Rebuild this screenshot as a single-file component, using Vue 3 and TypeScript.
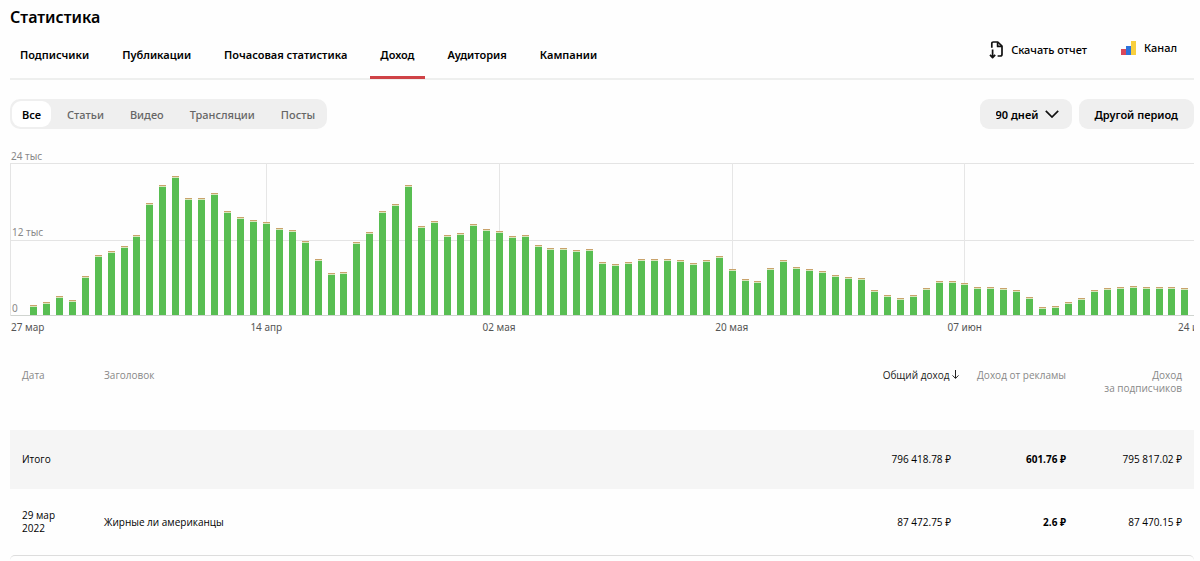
<script setup lang="ts">
import { ref } from 'vue'

interface Row {
  date: string[]
  title: string
  total: string
  ads: string
  subscribers: string
}

const tabs = ['Подписчики', 'Публикации', 'Почасовая статистика', 'Доход', 'Аудитория', 'Кампании']
const activeTab = ref('Доход')

const kinds = ['Все', 'Статьи', 'Видео', 'Трансляции', 'Посты']
const activeKind = ref('Все')

const period = ref('90')

// Daily income in thousands of roubles, 27 March to 24 June
const maxIncome = 24
const income: number[] = [
  1.6, 2.1, 3.05, 2.4, 6.2, 9.5, 10.1, 10.9, 12.7, 17.7, 20.5, 22, 18.5, 18.5, 19.3, 16.5, 15.5, 15.05,
  14.7, 13.7, 13.5, 11.7, 8.9, 6.7, 6.8, 11.5, 13.1, 16.5, 17.6, 20.5, 14.05, 14.9, 12.6, 13, 14.3, 13.6,
  13.3, 12.5, 12.6, 11.1, 10.6, 10.6, 10.3, 10.4, 8.4, 8.1, 8.4, 8.9, 8.9, 8.9, 8.7, 8.2, 8.7, 9.3,
  7.3, 5.7, 5.3, 7.5, 8.7, 7.6, 7.3, 7, 6.3, 6.05, 5.9, 4, 3.2, 2.7, 3.2, 4.3, 5.3, 5.3,
  5.05, 4.5, 4.5, 4.3, 4, 2.9, 1.3, 1.5, 2.1, 2.7, 4, 4.3, 4.5, 4.6, 4.5, 4.5, 4.5, 4.3,
]

const ticks = [
  { day: 18, label: '14 апр' },
  { day: 36, label: '02 мая' },
  { day: 54, label: '20 мая' },
  { day: 72, label: '07 июн' },
]
const hasLine = (day: number): boolean => ticks.some((t) => t.day === day)

const rows: Row[] = [
  { date: ['29 мар', '2022'], title: 'Жирные ли американцы', total: '87 472.75 ₽', ads: '2.6 ₽', subscribers: '87 470.15 ₽' },
]
</script>

<template>
  <main class="page">
    <h1 class="title">Статистика</h1>

    <header class="bar">
      <nav class="tabs">
        <a
          v-for="tab in tabs"
          :key="tab"
          href="#"
          class="tab"
          :class="{ active: tab === activeTab }"
          @click.prevent="activeTab = tab"
        >{{ tab }}</a>
      </nav>
      <div class="actions">
        <button type="button" class="action">
          <svg width="14" height="18" viewBox="0 0 14 18" fill="none" stroke="#111" stroke-width="1.7" stroke-linejoin="round" aria-hidden="true">
            <path d="M2.8 6.8V2.6Q2.8 1 4.4 1H8.8L13 5.2V13.2Q13 15 11.2 15H8.6" />
            <path d="M8.6 1.2V5.4H12.8" />
            <path d="M3.6 8.4V16.2M1 13.8L3.6 16.6L6.2 13.8" />
          </svg>
          <span>Скачать отчет</span>
        </button>
        <a href="#" class="action channel">
          <svg width="15" height="14" viewBox="0 0 15 14" aria-hidden="true">
            <rect x="0" y="8" width="5" height="6" fill="#d9485a" />
            <rect x="5" y="5" width="5" height="9" fill="#2d73dc" />
            <rect x="10" y="0" width="5" height="14" fill="#f8cf3e" />
          </svg>
          <span>Канал</span>
        </a>
      </div>
    </header>

    <section class="filters">
      <div class="kinds">
        <button
          v-for="kind in kinds"
          :key="kind"
          type="button"
          class="kind"
          :class="{ active: kind === activeKind }"
          :aria-pressed="kind === activeKind"
          @click="activeKind = kind"
        >{{ kind }}</button>
      </div>
      <div class="periods">
        <div class="select">
          <select v-model="period" aria-label="Период">
            <option value="90">90 дней</option>
          </select>
          <svg class="chevron" width="14" height="8" viewBox="0 0 14 8" fill="none" stroke="#111" stroke-width="1.7" aria-hidden="true">
            <path d="M0.8 0.8L7 7L13.2 0.8" />
          </svg>
        </div>
        <button type="button" class="other">Другой период</button>
      </div>
    </section>

    <section class="chart">
      <span class="scale">24 тыс</span>
      <div class="plot">
        <div class="half upper"><span class="scale">12 тыс</span></div>
        <div class="half lower"><span class="scale">0</span></div>
        <div class="days">
          <div v-for="(value, day) in income" :key="day" class="day" :class="{ line: hasLine(day) }">
            <div class="column" :style="{ height: (value / maxIncome) * 100 + '%' }"></div>
          </div>
        </div>
      </div>
      <div class="axis">
        <span class="first">27 мар</span>
        <span v-for="t in ticks" :key="t.day" class="tick" :style="{ gridColumn: t.day + 2 }">{{ t.label }}</span>
        <span class="last">24 июн</span>
      </div>
    </section>

    <table class="table">
      <thead>
        <tr>
          <th class="date" scope="col">Дата</th>
          <th scope="col">Заголовок</th>
          <th class="num total" scope="col">
            <button type="button" class="sort">
              Общий доход
              <svg width="7" height="9" viewBox="0 0 7 9" fill="none" stroke="#222" aria-hidden="true">
                <path d="M3.5 0V8.2M0.5 5.4L3.5 8.4L6.5 5.4" />
              </svg>
            </button>
          </th>
          <th class="num ads" scope="col">Доход от рекламы</th>
          <th class="num subs" scope="col">Доход<br />за подписчиков</th>
        </tr>
      </thead>
      <tbody>
        <tr class="sum">
          <td class="date">Итого</td>
          <td></td>
          <td class="num total">796 418.78 ₽</td>
          <td class="num ads">601.76 ₽</td>
          <td class="num subs">795 817.02 ₽</td>
        </tr>
        <tr v-for="row in rows" :key="row.title" class="item">
          <td class="date">{{ row.date[0] }}<br />{{ row.date[1] }}</td>
          <td>{{ row.title }}</td>
          <td class="num total">{{ row.total }}</td>
          <td class="num ads">{{ row.ads }}</td>
          <td class="num subs">{{ row.subscribers }}</td>
        </tr>
      </tbody>
    </table>
    <div class="next-card"></div>
  </main>
</template>

<style>
body {
  background: #fefefe;
}
</style>

<style scoped>
.page {
  padding: 6px 6px 0 10px;
  font-family: 'Noto Sans', 'Open Sans', sans-serif;
  font-size: 11px;
  font-weight: 600;
  color: #000;
}
button,
select {
  font: inherit;
  color: inherit;
  border: 0;
  margin: 0;
  padding: 0;
  background: none;
  cursor: pointer;
}
a {
  color: inherit;
  text-decoration: none;
}
.title {
  margin: 0;
  font-size: 16px;
  line-height: 22px;
  font-weight: 600;
}
.bar {
  display: flex;
  justify-content: space-between;
  height: 50px;
  border-bottom: 2px solid #eeefee;
}
.tabs {
  display: flex;
  gap: 13px;
}
.tab {
  padding: 18px 10px 0;
  line-height: 18px;
}
.tab.active {
  border-bottom: 3px solid #cf4246;
  margin-bottom: -1px;
}
.actions {
  display: flex;
  align-items: flex-start;
  gap: 34px;
  padding: 13px 17px 0 0;
  font-weight: 500;
}
.action {
  display: flex;
  align-items: center;
  gap: 8px;
  line-height: 18px;
}
.channel {
  margin-top: -2px;
}
.filters {
  display: flex;
  justify-content: space-between;
  margin-top: 19px;
}
.kinds {
  display: flex;
  gap: 6px;
  padding: 2px;
  border-radius: 10px;
  background: #efefef;
}
.kind {
  height: 26px;
  padding: 0 10px;
  border-radius: 9px;
  font-weight: 500;
  color: #666;
}
.kind.active {
  background: #fff;
  font-weight: 600;
  color: #000;
}
.periods {
  display: flex;
  gap: 7px;
}
.select {
  display: grid;
  align-items: center;
}
.select select {
  grid-area: 1 / 1;
  appearance: none;
  height: 30px;
  padding: 0 33px 0 16px;
  border-radius: 9px;
  background: #efefef;
}
.chevron {
  grid-area: 1 / 1;
  justify-self: end;
  margin-right: 13px;
  pointer-events: none;
}
.other {
  height: 30px;
  padding: 0 16px;
  border-radius: 9px;
  background: #efefef;
}
.chart {
  margin-top: 20px;
  overflow: hidden;
  font-size: 10px;
  font-weight: 400;
  color: #555;
}
.scale {
  display: block;
  padding-left: 1px;
  line-height: 14px;
  color: #888;
}
.plot {
  display: grid;
  grid-template-rows: 77px 76px;
  border-left: 1px solid #e4e4e4;
}
.half {
  display: flex;
  align-items: flex-end;
  padding-bottom: 1px;
  border-top: 1px solid #e4e4e4;
}
.upper {
  grid-area: 1 / 1;
}
.lower {
  grid-area: 2 / 1;
}
.days {
  grid-area: 1 / 1 / 3 / 2;
  display: flex;
  padding: 0 3px 0 16px;
  border-bottom: 1px solid #d0d4d0;
}
.day {
  flex: 1;
  display: flex;
  flex-direction: column;
  justify-content: flex-end;
  align-items: center;
}
.day.line::before {
  content: '';
  flex: 1;
  width: 1px;
  background: #e6e6e6;
}
.column {
  width: 7px;
  box-sizing: border-box;
  border-top: 1px solid #c9a36c;
  background: linear-gradient(#d8e6bd 1px, #58be52 1px);
}
.axis {
  display: grid;
  grid-template-columns: 17px repeat(90, minmax(0, 1fr)) 3px;
  margin-top: 4px;
  line-height: 14px;
  white-space: nowrap;
}
.axis span {
  grid-row: 1;
}
.first {
  grid-column: 1;
  padding-left: 1px;
}
.tick {
  justify-self: center;
}
.last {
  grid-column: 91;
}
.table {
  width: 100%;
  margin-top: 35px;
  border-spacing: 0;
  font-family: 'Open Sans', 'Noto Sans', sans-serif;
  font-size: 10px;
  font-weight: 400;
  line-height: 13px;
}
.table th {
  height: 61px;
  padding: 0;
  vertical-align: top;
  text-align: left;
  font-weight: 400;
  color: #888;
}
.table td {
  height: 59px;
  padding: 0;
}
.table .item td {
  height: 66px;
}
.table .sum td {
  background: #f5f5f5;
}
.table .date {
  width: 82px;
  padding-left: 12px;
}
.table .num {
  text-align: right;
  white-space: nowrap;
}
.table .total {
  width: 120px;
}
.table td.total {
  padding-right: 8px;
  width: 112px;
}
.table .ads {
  width: 107px;
}
.table td.ads {
  font-weight: 700;
}
.table .subs {
  width: 116px;
  padding-right: 12px;
}
.sort {
  font-weight: 500;
  color: #222;
}
.next-card {
  height: 4px;
  border-top: 1px solid #ddd;
  border-radius: 6px 6px 0 0;
}
</style>
